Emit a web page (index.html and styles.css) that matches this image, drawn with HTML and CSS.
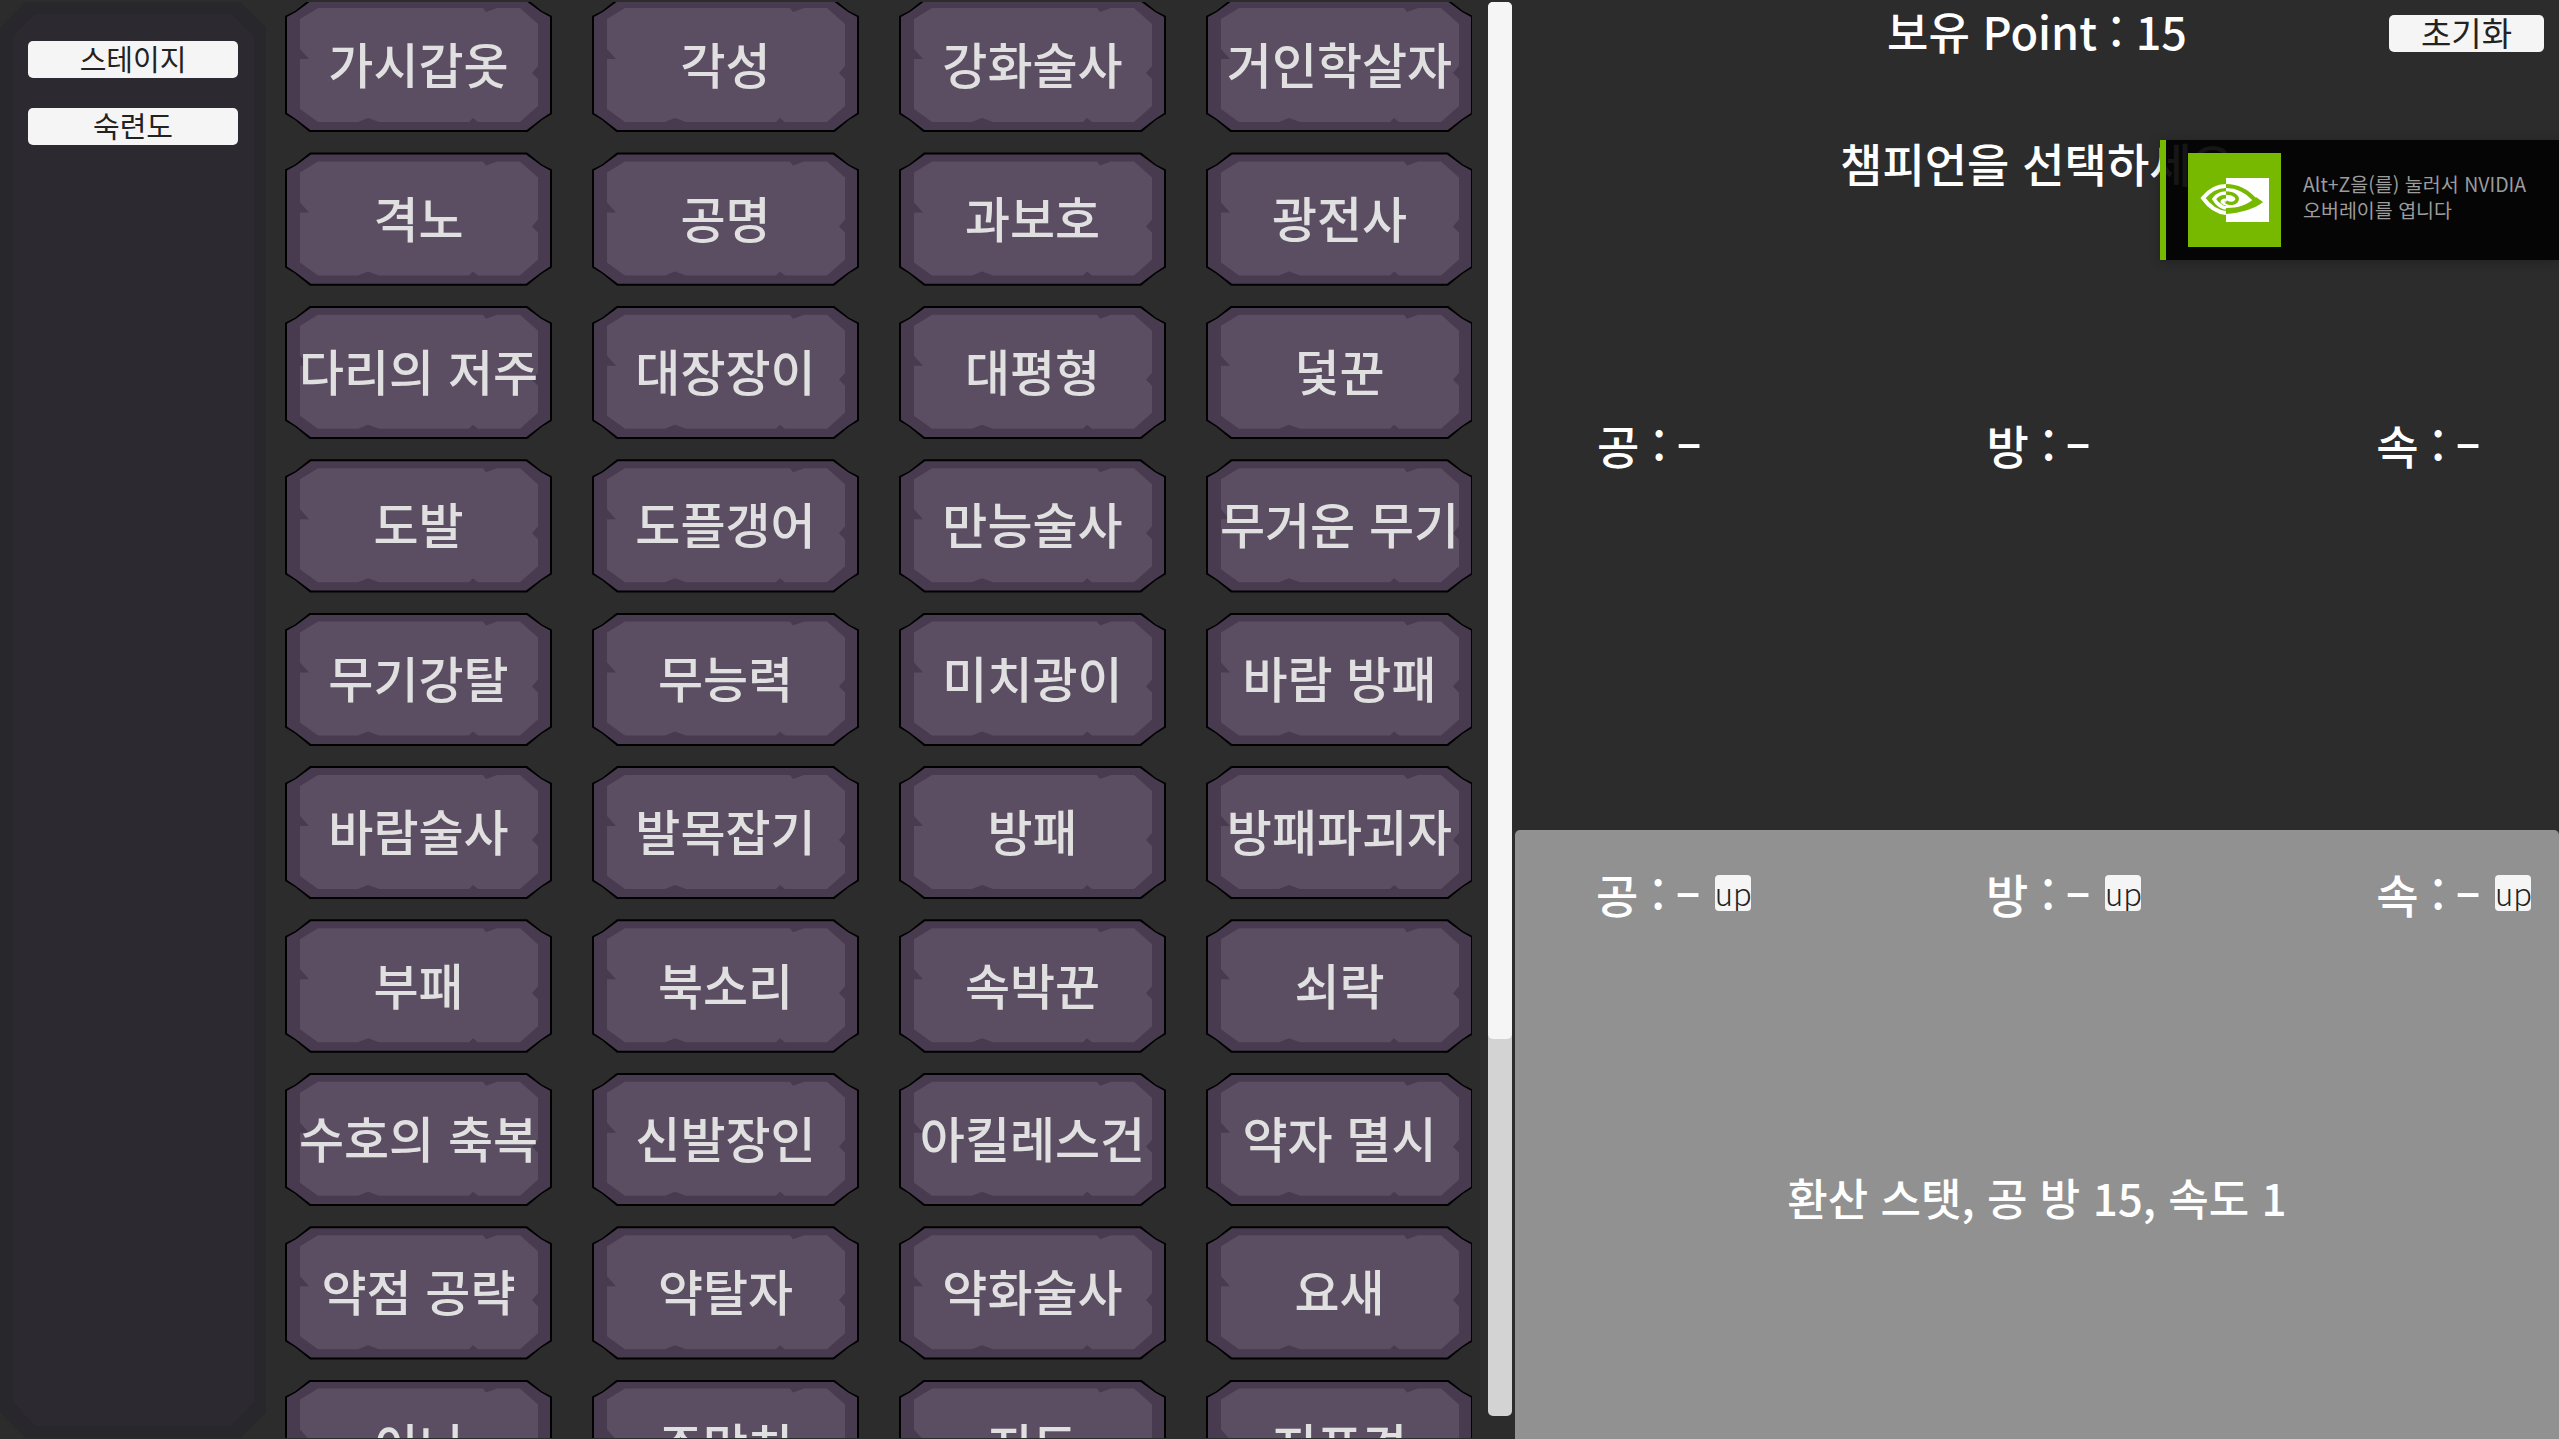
FILE: index.html
```html
<!DOCTYPE html>
<html lang="ko">

<head>
    <meta charset="UTF-8">
    <title>챔피언 선택</title>
    <link rel="stylesheet" href="styles.css">
</head>

<body>
    <div class="sidebar">
        <button class="side-btn">스테이지</button>
        <button class="side-btn">숙련도</button>
    </div>

    <div class="list">
        <div class="grid">
            <div class="card"><span>가시갑옷</span></div>
            <div class="card"><span>각성</span></div>
            <div class="card"><span>강화술사</span></div>
            <div class="card"><span>거인학살자</span></div>
            <div class="card"><span>격노</span></div>
            <div class="card"><span>공명</span></div>
            <div class="card"><span>과보호</span></div>
            <div class="card"><span>광전사</span></div>
            <div class="card"><span>다리의 저주</span></div>
            <div class="card"><span>대장장이</span></div>
            <div class="card"><span>대평형</span></div>
            <div class="card"><span>덫꾼</span></div>
            <div class="card"><span>도발</span></div>
            <div class="card"><span>도플갱어</span></div>
            <div class="card"><span>만능술사</span></div>
            <div class="card"><span>무거운 무기</span></div>
            <div class="card"><span>무기강탈</span></div>
            <div class="card"><span>무능력</span></div>
            <div class="card"><span>미치광이</span></div>
            <div class="card"><span>바람 방패</span></div>
            <div class="card"><span>바람술사</span></div>
            <div class="card"><span>발목잡기</span></div>
            <div class="card"><span>방패</span></div>
            <div class="card"><span>방패파괴자</span></div>
            <div class="card"><span>부패</span></div>
            <div class="card"><span>북소리</span></div>
            <div class="card"><span>속박꾼</span></div>
            <div class="card"><span>쇠락</span></div>
            <div class="card"><span>수호의 축복</span></div>
            <div class="card"><span>신발장인</span></div>
            <div class="card"><span>아킬레스건</span></div>
            <div class="card"><span>약자 멸시</span></div>
            <div class="card"><span>약점 공략</span></div>
            <div class="card"><span>약탈자</span></div>
            <div class="card"><span>약화술사</span></div>
            <div class="card"><span>요새</span></div>
            <div class="card"><span>이니</span></div>
            <div class="card"><span>주망치</span></div>
            <div class="card"><span>지도</span></div>
            <div class="card"><span>지표견</span></div>
        </div>
    </div>

    <div class="scrollbar">
        <div class="scroll-thumb"></div>
    </div>

    <div class="detail">
        <div class="detail-top">
            <div class="header">
                <div class="point">보유 Point : 15</div>
                <button class="reset-btn">초기화</button>
            </div>
            <div class="select-title">챔피언을 선택하세요</div>
            <div class="stats">
                <div>공 : <span class="dash">-</span></div>
                <div>방 : <span class="dash">-</span></div>
                <div>속 : <span class="dash">-</span></div>
            </div>
        </div>

        <div class="detail-bottom">
            <div class="stats-up">
                <div class="stat-up"><div>공 : <span class="dash">-</span></div><button class="up-btn">up</button></div>
                <div class="stat-up"><div>방 : <span class="dash">-</span></div><button class="up-btn">up</button></div>
                <div class="stat-up"><div>속 : <span class="dash">-</span></div><button class="up-btn">up</button></div>
            </div>
            <div class="convert">환산 스탯, 공 방 15, 속도 1</div>
        </div>
    </div>

    <div class="toast">
        <svg class="toast-icon" viewBox="0 0 93 94">
            <rect width="93" height="94" fill="#76b900" />
            <rect x="38" y="25" width="43" height="44" fill="#fff" />
            <path d="M38 33C28 33 20 39 15 45C20 52 28 59 38 60" fill="none" stroke="#fff" stroke-width="4" />
            <path d="M38 40C32 40 28 43 26 46C29 51 33 54 38 55" fill="none" stroke="#fff" stroke-width="3.5" />
            <path d="M38 47C35 47 34 48 34 49C35 50 36 51 38 51" fill="none" stroke="#fff" stroke-width="3" />
            <path d="M38 33C50 33 60 39 67 47" fill="none" stroke="#76b900" stroke-width="4" />
            <path d="M38 61C52 60 67 56 75 49L68 44C60 52 50 55 38 55Z" fill="#76b900" />
            <path d="M38 40C46 40 50 44 49 47C47 51 42 51 38 49" fill="none" stroke="#76b900" stroke-width="3.5" />
        </svg>
        <div class="toast-text">Alt+Z을(를) 눌러서 NVIDIA<br>오버레이를 엽니다</div>
    </div>
</body>

</html>
```

FILE: styles.css
```css
* {
    box-sizing: border-box;
}

html,
body {
    height: 100%;
}

body {
    margin: 0;
    display: flex;
    overflow: hidden;
    background-color: #2c2c2c;
    color: #fff;
    font-family: "Noto Sans CJK KR", "Noto Sans", sans-serif;
}

button {
    border: none;
    background-color: #f5f5f5;
    color: #222;
    font-family: inherit;
    padding: 0;
}

/* left panel */
.sidebar {
    position: relative;
    flex: none;
    width: 266px;
    height: 1436px;
    margin-top: 2px;
    padding: 39px 28px 0;
    display: flex;
    flex-direction: column;
    gap: 30px;
    background-color: #28272b;
    clip-path: polygon(25px 0, 240px 0, 266px 25px, 266px 1411px, 240px 100%, 25px 100%, 0 1411px, 0 25px);
}

.sidebar::before {
    content: "";
    position: absolute;
    inset: 12px 12px 12px 13px;
    background-color: #2c2a30;
    clip-path: polygon(22px 0, 218px 0, 241px 22px, 241px 1388px, 218px 100%, 22px 100%, 0 1388px, 0 22px);
}

.side-btn {
    position: relative;
    height: 37px;
    border-radius: 5px;
    font-size: 29px;
    line-height: 31px;
    padding-bottom: 3px;
}

/* card list */
.list {
    flex: none;
    width: 1187px;
    height: 1436px;
    margin: 2px 0 0 19px;
    overflow: hidden;
}

.grid {
    display: grid;
    grid-template-columns: repeat(4, 267px);
    grid-auto-rows: 133.4px;
    column-gap: 40px;
    row-gap: 20px;
    margin-top: -3px;
}

.card {
    position: relative;
    display: flex;
    align-items: center;
    justify-content: center;
    padding-bottom: 6px;
    background-color: #000;
    color: #e0e0e0;
    font-size: 49px;
    font-weight: 500;
    white-space: nowrap;
    clip-path: polygon(0 17px, 10px 12px, 25px 0, 242px 0, 257px 12px, 100% 17px, 100% 115px, 257px 121px, 242px 100%, 25px 100%, 10px 121px, 0 115px);
}

.card::before {
    content: "";
    position: absolute;
    inset: 2px;
    background-color: #483b4f;
    clip-path: polygon(0 16px, 9px 11px, 24px 0, 239px 0, 254px 11px, 100% 16px, 100% 112px, 254px 118px, 239px 100%, 24px 100%, 9px 118px, 0 112px);
}

.card::after {
    content: "";
    position: absolute;
    inset: 0;
    background-color: #5b4d62;
    clip-path: polygon(15px 20px, 33px 9px, 198px 9px, 201px 13px, 212px 9px, 235px 9px, 253px 25px, 253px 67px, 247px 74px, 253px 80px, 253px 107px, 235px 123px, 193px 123px, 188px 119px, 184px 123px, 94px 123px, 83px 119px, 73px 123px, 33px 123px, 15px 110px, 15px 60px, 24px 60px, 15px 50px);
}

.card span {
    position: relative;
    z-index: 1;
}

/* scrollbar */
.scrollbar {
    flex: none;
    width: 24px;
    height: 1414px;
    margin: 2px 3px 0 16px;
    border-radius: 5px;
    background-color: #d3d3d3;
}

.scroll-thumb {
    height: 1037px;
    border-radius: 5px;
    background-color: #f5f5f5;
}

/* right panel */
.detail {
    flex: 1;
    display: flex;
    flex-direction: column;
    min-width: 0;
}

.detail-top {
    height: 830px;
    flex: none;
}

.header {
    display: grid;
    grid-template-columns: 1fr auto 1fr;
    align-items: start;
    height: 63px;
}

.point {
    grid-column: 2;
    font-size: 45px;
    font-weight: 500;
    line-height: 62px;
}

.reset-btn {
    justify-self: end;
    width: 155px;
    height: 37px;
    margin: 15px 15px 0 0;
    border-radius: 5px;
    font-size: 33px;
    line-height: 32px;
    padding-bottom: 3px;
}

.select-title {
    margin-top: 67px;
    text-align: center;
    font-size: 46px;
    font-weight: 500;
    line-height: 64px;
}

.stats {
    display: flex;
    justify-content: space-between;
    margin-top: 218px;
    padding: 0 82px;
    font-size: 46px;
    font-weight: 500;
    line-height: 64px;
}

/* the hyphen of the original font is much longer */
.dash {
    display: inline-block;
    width: 18px;
    margin-left: 1px;
    text-align: center;
    transform: scaleX(1.7);
}

.detail-bottom {
    flex: 1;
    border-radius: 5px 5px 0 0;
    background-color: #919191;
}

.stats-up {
    display: flex;
    justify-content: space-between;
    margin-top: 31px;
    padding: 0 28px 0 81px;
}

.stat-up {
    display: flex;
    align-items: center;
    gap: 18px;
    font-size: 46px;
    font-weight: 500;
    line-height: 64px;
}

.up-btn {
    width: 36px;
    height: 36px;
    border-radius: 4px;
    font-size: 31px;
    line-height: 32px;
    font-weight: 300;
    overflow: hidden;
}

.convert {
    margin-top: 240px;
    text-align: center;
    font-size: 44px;
    font-weight: 500;
    line-height: 64px;
}

/* nvidia notice */
.toast {
    position: absolute;
    top: 140px;
    right: 0;
    width: 399px;
    height: 120px;
    display: flex;
    align-items: center;
    gap: 22px;
    padding-left: 22px;
    border-left: 6px solid #76b900;
    background-color: rgba(2, 2, 2, 0.92);
    box-shadow: 0 2px 10px rgba(0, 0, 0, 0.25);
}

.toast-icon {
    flex: none;
    width: 93px;
    height: 94px;
}

.toast-text {
    padding-bottom: 6px;
    color: #9c9c9c;
    font-size: 19.5px;
    line-height: 26px;
    white-space: nowrap;
}
```
